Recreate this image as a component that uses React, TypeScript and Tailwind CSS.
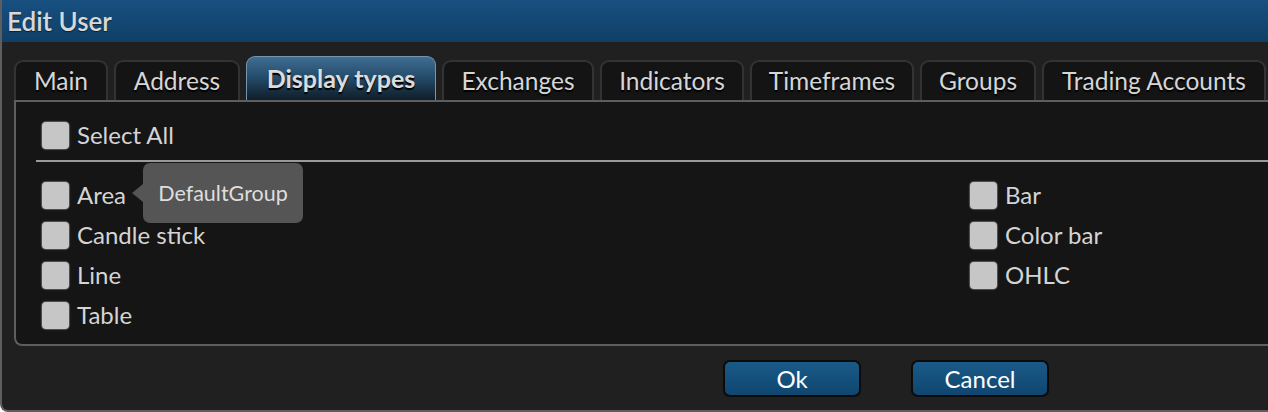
import React from "react";

const tabs = [
  { label: "Main", w: "w-[94px]" },
  { label: "Address", w: "w-[126px]" },
  { label: "Display types", w: "w-[190px]", active: true },
  { label: "Exchanges", w: "w-[152px]" },
  { label: "Indicators", w: "w-[144px]" },
  { label: "Timeframes", w: "w-[164px]" },
  { label: "Groups", w: "w-[116px]" },
  { label: "Trading Accounts", w: "w-[224px]" },
];

const leftItems = ["Area", "Candle stick", "Line", "Table"];
const rightItems = ["Bar", "Color bar", "OHLC"];

const Box = () => (
  <span className="block w-[27px] h-[27px] shrink-0 rounded-[4px] bg-[#c6c6c6] shadow-[0_0_1px_1px_rgba(198,198,198,0.35)]" />
);

const Check = ({ label, children }: { label: string; children?: React.ReactNode }) => (
  <div className="relative flex items-center h-[40px] gap-[8px]">
    <Box />
    <span className="text-[24px] leading-none text-[#d4d4d4]">{label}</span>
    {children}
  </div>
);

export default function App() {
  return (
    <div
      className="w-[1268px] h-[412px] overflow-hidden bg-[#202020] flex flex-col border-l-2 border-b-2 border-[#5e5e5e] rounded-bl-[8px]"
      style={{ fontFamily: "Lato, 'Open Sans', sans-serif" }}
    >
      {/* Title bar */}
      <div className="h-[42px] shrink-0 bg-gradient-to-b from-[#185081] to-[#0f3f66] flex items-center pl-[5px]">
        <span className="text-[26px] font-semibold text-[#d8d8d8] [text-shadow:0_1px_1px_rgba(0,0,0,0.5)]">
          Edit User
        </span>
      </div>

      {/* Tabs */}
      <div className="flex items-end gap-[6px] pl-[12px] mt-[14px] h-[44px] shrink-0">
        {tabs.map((t) =>
          t.active ? (
            <div
              key={t.label}
              className={`${t.w} h-[44px] shrink-0 flex items-center justify-center rounded-t-[9px] border-t border-x border-[#7595b2] bg-gradient-to-b from-[#3f6d93] via-[#234a68] to-[#0f1d29] text-[25px] font-bold text-[#dcdcdc] [text-shadow:0_2px_1px_#000]`}
            >
              {t.label}
            </div>
          ) : (
            <div
              key={t.label}
              className={`${t.w} h-[40px] shrink-0 flex items-center justify-center rounded-t-[9px] border-t-2 border-x-2 border-[#333333] bg-[#141414] text-[24.5px] text-[#d6d6d6] [text-shadow:0_2px_1px_#000]`}
            >
              {t.label}
            </div>
          )
        )}
      </div>

      {/* Panel */}
      <div className="ml-[12px] h-[246px] shrink-0 bg-[#151515] border-t-2 border-l-2 border-b-2 border-[#5e5e5e] rounded-bl-[8px] flex flex-col">
        <div className="pl-[26px] pt-[13px] pb-[5px]">
          <Check label="Select All" />
        </div>
        <div className="ml-[20px] h-[2px] bg-[#9a9a9a]" />
        <div className="flex pl-[26px] pt-[13px]">
          <div className="w-[928px] flex flex-col">
            {leftItems.map((l) =>
              l === "Area" ? (
                <Check key={l} label={l}>
                  <div className="absolute left-[90px] top-[-2px] flex items-center h-[40px]">
                    <span className="w-0 h-0 border-y-[9px] border-y-transparent border-r-[11px] border-r-[#555555]" />
                    <div className="w-[160px] h-[60px] rounded-[7px] bg-[#555555] flex items-center justify-center text-[21.5px] text-[#dedede]">
                      DefaultGroup
                    </div>
                  </div>
                </Check>
              ) : (
                <Check key={l} label={l} />
              )
            )}
          </div>
          <div className="flex flex-col">
            {rightItems.map((r) => (
              <Check key={r} label={r} />
            ))}
          </div>
        </div>
      </div>

      {/* Buttons */}
      <div className="flex gap-[50px] pl-[721px] pt-[14px]">
        {["Ok", "Cancel"].map((b) => (
          <button
            key={b}
            className="w-[138px] h-[37px] rounded-[7px] border-2 border-[#0b0b0b] bg-gradient-to-b from-[#1a5a88] to-[#0f4670] text-[24px] text-white flex items-center justify-center"
          >
            {b}
          </button>
        ))}
      </div>
    </div>
  );
}
